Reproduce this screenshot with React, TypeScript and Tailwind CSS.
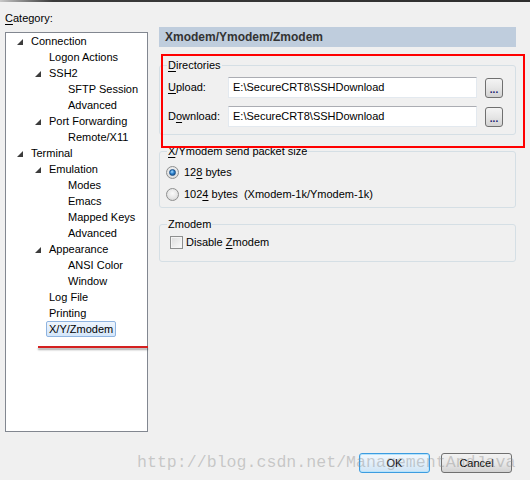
import React from "react";

type Node = { label: React.ReactNode; level: 0 | 1 | 2; arrow?: boolean; selected?: boolean };

const levelPad: Record<number, string> = {
  0: "pl-[11px]",
  1: "pl-[29px]",
  2: "pl-[48px]",
};

const tree: Node[] = [
  { label: "Connection", level: 0, arrow: true },
  { label: "Logon Actions", level: 1 },
  { label: "SSH2", level: 1, arrow: true },
  { label: "SFTP Session", level: 2 },
  { label: "Advanced", level: 2 },
  { label: "Port Forwarding", level: 1, arrow: true },
  { label: "Remote/X11", level: 2 },
  { label: "Terminal", level: 0, arrow: true },
  { label: "Emulation", level: 1, arrow: true },
  { label: "Modes", level: 2 },
  { label: "Emacs", level: 2 },
  { label: "Mapped Keys", level: 2 },
  { label: "Advanced", level: 2 },
  { label: "Appearance", level: 1, arrow: true },
  { label: "ANSI Color", level: 2 },
  { label: "Window", level: 2 },
  { label: "Log File", level: 1 },
  { label: "Printing", level: 1 },
  { label: "X/Y/Zmodem", level: 1, selected: true },
];

function Arrow() {
  return (
    <svg width="6" height="6" viewBox="0 0 6 6" className="mt-[2px]">
      <polygon points="6,0 6,6 0,6" fill="#3c3c3c" />
    </svg>
  );
}

function Radio({ checked }: { checked?: boolean }) {
  return (
    <span className="w-[13px] h-[13px] rounded-full border border-[#8e8f8f] bg-[radial-gradient(circle_at_50%_40%,#fafafa_0%,#e6e6e6_55%,#cdcdcd_100%)] flex items-center justify-center shrink-0">
      {checked && (
        <span className="w-[7px] h-[7px] rounded-full bg-[radial-gradient(circle_at_40%_35%,#a8dcff_0%,#2f83cf_45%,#0c3e76_100%)] border border-[#1b4f86]" />
      )}
    </span>
  );
}

function SmallBtn() {
  return (
    <button className="ml-[8px] w-[18px] h-[20px] rounded-[3px] border border-[#707070] bg-linear-to-b from-[#f4f4f4] via-[#e6e6e6] to-[#d2d2d2] flex items-end justify-center pb-[3px] shrink-0">
      <span className="text-[10px] leading-[8px] text-[#1a1a6e] font-bold tracking-[0px]">...</span>
    </button>
  );
}

export default function App() {
  return (
    <div className="relative w-[530px] h-[480px] bg-[#f0f0f0] overflow-hidden font-['Liberation_Sans',Arial,sans-serif] text-[11px] text-black">
      <div className="h-[2px] bg-linear-to-r from-[#c8c8c8] via-[#3a3a3a] via-[10%] to-[#2e2e2e]" />
      <div className="flex items-start">
        <div className="w-[148px] pl-[5px] pt-[8px] shrink-0">
          <div className="leading-[16px] h-[16px]">
            <span className="underline underline-offset-[2px]">C</span>ategory:
          </div>
          <div className="mt-[6px] h-[400px] bg-white border border-[#828790]">
            {tree.map((n, i) => (
              <div key={i} className={`h-[16px] flex items-center ${levelPad[n.level]}`}>
                <span className="w-[14px] h-[16px] flex items-center shrink-0">{n.arrow && <Arrow />}</span>
                {n.selected ? (
                  <span className="-ml-[3px] px-[2px] h-[16px] leading-[14px] rounded-[2px] border border-[#8fb4e0] bg-linear-to-b from-[#eef5fd] to-[#d4e6fa]">
                    {n.label}
                  </span>
                ) : (
                  <span className="leading-[16px] whitespace-nowrap">{n.label}</span>
                )}
              </div>
            ))}
          </div>
        </div>

        <div className="ml-[11px] w-[357px] pt-[25px] shrink-0">
          <div className="h-[20px] bg-[#bfcddd] pl-[6px] flex items-center font-bold text-[12px] text-[#333]">
            Xmodem/Ymodem/Zmodem
          </div>

          <fieldset className="mt-[11px] border border-[#d5dfe5] rounded-[3px] pl-[8px] pt-[5px] pb-[7px]">
            <legend className="-ml-[1px] px-[1px] leading-[14px]">
              <span className="underline underline-offset-[2px]">D</span>irectories
            </legend>
            <div className="flex items-center h-[21px]">
              <span className="w-[60px] shrink-0">
                <span className="underline underline-offset-[2px]">U</span>pload:
              </span>
              <div className="w-[249px] h-[21px] bg-white border border-[#e3e9ef] border-t-[#abadb3] flex items-center pl-[4px]">
                E:\SecureCRT8\SSHDownload
              </div>
              <SmallBtn />
            </div>
            <div className="flex items-center h-[21px] mt-[8px]">
              <span className="w-[60px] shrink-0">
                D<span className="underline underline-offset-[2px]">o</span>wnload:
              </span>
              <div className="w-[249px] h-[21px] bg-white border border-[#e3e9ef] border-t-[#abadb3] flex items-center pl-[4px]">
                E:\SecureCRT8\SSHDownload
              </div>
              <SmallBtn />
            </div>
          </fieldset>

          <fieldset className="mt-[9px] border border-[#d5dfe5] rounded-[3px] pl-[6px] pt-[3px] pb-[2px]">
            <legend className="ml-[1px] px-[1px] leading-[14px]">
              <span className="underline underline-offset-[2px]">X</span>/Ymodem send packet size
            </legend>
            <div className="flex items-center h-[22px]">
              <Radio checked />
              <span className="ml-[5px]">
                12<span className="underline underline-offset-[2px]">8</span> bytes
              </span>
            </div>
            <div className="flex items-center h-[22px]">
              <Radio />
              <span className="ml-[5px] whitespace-pre">
                102<span className="underline underline-offset-[2px]">4</span> bytes  (Xmodem-1k/Ymodem-1k)
              </span>
            </div>
          </fieldset>

          <fieldset className="mt-[9px] border border-[#d5dfe5] rounded-[3px] pl-[10px] pt-[3px] pb-[11px]">
            <legend className="-ml-[3px] px-[1px] leading-[14px]">Zmodem</legend>
            <div className="flex items-center h-[16px]">
              <span className="w-[13px] h-[13px] border border-[#8e8f8f] bg-linear-to-br from-[#dcdcdc] to-[#fbfbfb] shadow-[inset_0_0_0_1px_#f4f4f4] shrink-0" />
              <span className="ml-[3px]">
                Disable <span className="underline underline-offset-[2px]">Z</span>modem
              </span>
            </div>
          </fieldset>
        </div>
      </div>

      <div className="mt-[21px] h-[20px] flex justify-end gap-[11px] pr-[18px]">
        <button className="w-[71px] h-[20px] rounded-[3px] border border-[#3c9ce0] bg-linear-to-b from-[#f2f8fd] via-[#e3eff9] to-[#cfe4f5] shadow-[inset_0_0_0_1px_#b7e3fb] flex items-center justify-center">
          OK
        </button>
        <button className="w-[71px] h-[20px] rounded-[3px] border border-[#707070] bg-linear-to-b from-[#f2f2f2] via-[#e8e8e8] to-[#d2d2d2] flex items-center justify-center">
          Cancel
        </button>
      </div>

      {/* annotations */}
      <div className="absolute left-[161px] top-[54px] w-[364px] h-[94px] border-2 border-[#ff0000] pointer-events-none" />
      <div className="absolute left-[38px] top-[346px] w-[110px] h-[2px] bg-[#d42020] shadow-[0_2px_2px_rgba(0,0,0,0.35)]" />
      <div className="absolute left-[137px] top-[452px] leading-[22px] text-[16.6px] font-['Liberation_Mono',monospace] text-[rgba(140,140,140,0.42)] pointer-events-none whitespace-nowrap">
        http://blog.csdn.net/ManagementAndJava
      </div>
    </div>
  );
}
